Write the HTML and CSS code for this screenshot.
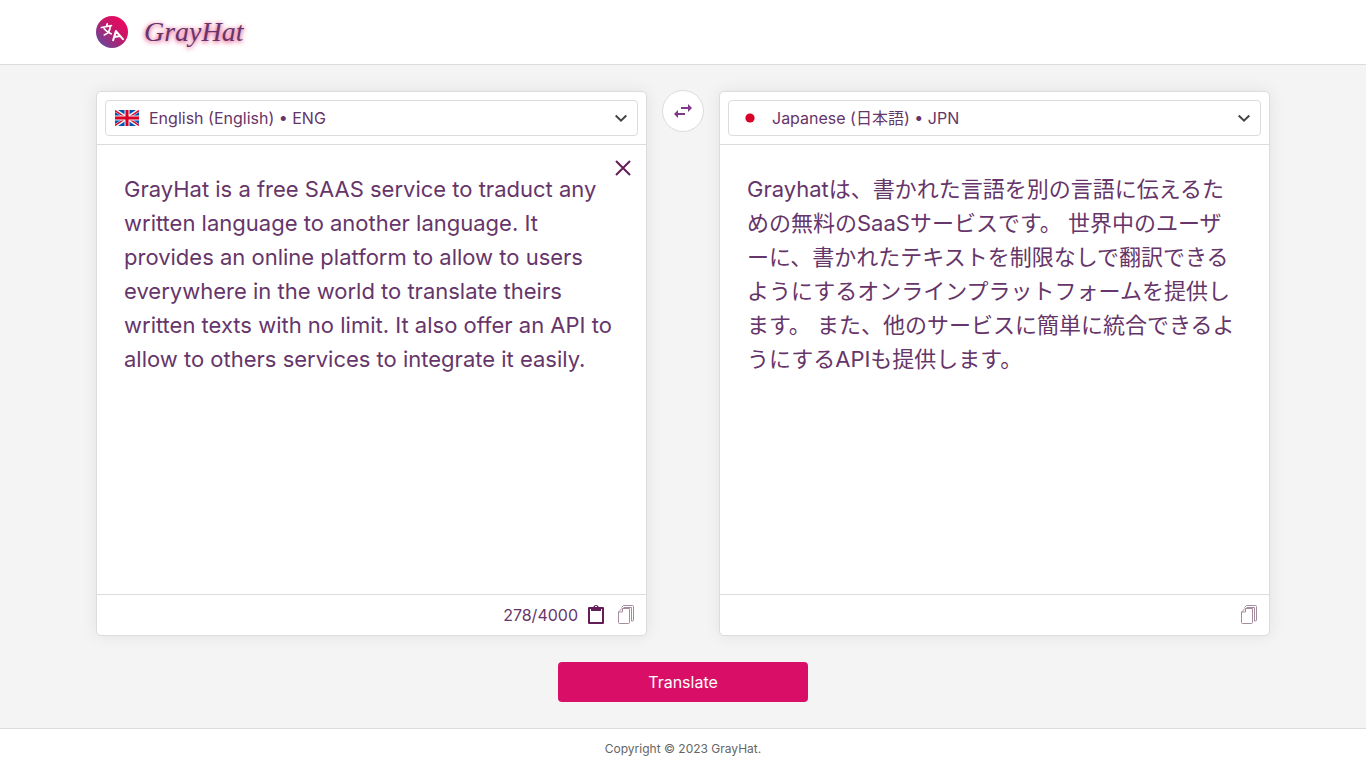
FILE: index.html
```
<!DOCTYPE html>
<html lang="en">
<head>
  <meta charset="utf-8">
  <meta name="viewport" content="width=device-width, initial-scale=1">
  <title>GrayHat</title>
  <link rel="stylesheet" href="styles.css">
</head>
<body>
  <header class="header">
    <a class="brand" href="#">
      <svg class="brand-logo" viewBox="0 0 34 34" aria-hidden="true">
        <defs>
          <linearGradient id="brand-fill" x1="0.85" y1="0.15" x2="0.15" y2="0.9">
            <stop offset="0" stop-color="#ea0960"/>
            <stop offset="0.4" stop-color="#c51768"/>
            <stop offset="1" stop-color="#6b4699"/>
          </linearGradient>
        </defs>
        <circle cx="17" cy="17" r="17" fill="url(#brand-fill)"/>
        <g fill="none" stroke="#fff" stroke-width="1.8" stroke-linecap="round" stroke-linejoin="round">
          <path d="M5.800 12.200 16.400 10.200M12 8.300l-1 3M15.200 10.700c-.3 4.500-2.200 7.800-6.400 9.400M8.700 13.500c2 2.600 4.500 4.400 7.500 5.400"/>
          <path stroke-width="2.200" d="M18.200 25.700 21.200 16 28.600 24.600M19.500 22.300l6.400-1"/>
        </g>
      </svg>
      <span class="brand-name">GrayHat</span>
    </a>
  </header>

  <main class="main">
    <form class="translator">
      <section class="panel">
        <div class="panel-head">
          <div class="picker">
            <svg class="flag" viewBox="0 0 24 16" aria-hidden="true">
              <path fill="#0052b4" d="M0 0h24v16H0z"/>
              <path stroke="#f0f0f0" stroke-width="3.400" d="M0 0l24 16M24 0 0 16"/>
              <path stroke="#d80027" stroke-width="1.300" d="M0 .6l11.500 7.700M24 15.400 12.500 7.700M24 .6 12.500 8.300M0 15.400l11.500-7.700"/>
              <path stroke="#f0f0f0" stroke-width="5" d="M12 0v16M0 8h24"/>
              <path stroke="#d80027" stroke-width="3" d="M12 0v16M0 8h24"/>
            </svg>
            <select class="picker-select" aria-label="Source language">
              <option>English (English) • ENG</option>
              <option>Japanese (日本語) • JPN</option>
            </select>
            <svg class="chevron" viewBox="0 0 14 14" aria-hidden="true"><path d="M1.700 4.500 7 9.600l5.300-5.100"/></svg>
          </div>
        </div>
        <div class="panel-body">
          <textarea class="text" aria-label="Text to translate" spellcheck="false">GrayHat is a free SAAS service to traduct any written language to another language. It provides an online platform to allow to users everywhere in the world to translate theirs written texts with no limit. It also offer an API to allow to others services to integrate it easily.</textarea>
          <button class="icon-button clear" type="button" aria-label="Clear text">
            <svg class="icon-clear" viewBox="0 0 16 16" aria-hidden="true"><path d="M1 1l14 14M15 1 1 15"/></svg>
          </button>
        </div>
        <div class="panel-foot">
          <span class="counter">278/4000</span>
          <button class="icon-button" type="button" aria-label="Paste">
            <svg class="icon-paste" viewBox="0 0 20 20" aria-hidden="true">
              <path fill="none" stroke="#641d56" stroke-width="2" stroke-linejoin="round" d="M3 3h14v15H3z"/>
              <path fill="#641d56" fill-rule="evenodd" d="M5 2h2.300a2.800 2.800 0 0 1 5.400 0H15v4H5zM10 .8a1 1 0 1 0 0 2 1 1 0 0 0 0-2z"/>
            </svg>
          </button>
          <button class="icon-button" type="button" aria-label="Copy source text">
            <svg class="icon-copy" viewBox="0 0 20 20" aria-hidden="true">
              <path d="M6 3.500h7.500v14a1 1 0 0 1-1 1h-9a1 1 0 0 1-1-1V7zM6.500 3.500v3.500h-4"/>
              <path d="M5.500 2.500 7.500.5h9a1 1 0 0 1 1 1v13.500a1 1 0 0 1-1 1h-1M7.500 2.500h8V16"/>
            </svg>
          </button>
        </div>
      </section>

      <button class="swap" type="button" aria-label="Swap languages">
        <svg class="icon-swap" viewBox="0 0 18 14" aria-hidden="true"><path d="M14 0 18 4l-4 4V5H7V3h7zM4 6 0 10l4 4v-3h7V9H4z"/></svg>
      </button>

      <section class="panel">
        <div class="panel-head">
          <div class="picker">
            <svg class="flag" viewBox="0 0 24 16" aria-hidden="true">
              <path fill="#fff" d="M0 0h24v16H0z"/>
              <circle cx="12" cy="8" r="4.600" fill="#d80027"/>
            </svg>
            <select class="picker-select" aria-label="Target language">
              <option>Japanese (日本語) • JPN</option>
              <option>English (English) • ENG</option>
            </select>
            <svg class="chevron" viewBox="0 0 14 14" aria-hidden="true"><path d="M1.700 4.500 7 9.600l5.300-5.100"/></svg>
          </div>
        </div>
        <div class="panel-body">
          <textarea class="text" lang="ja" aria-label="Translation" spellcheck="false" readonly>Grayhatは、書かれた言語を別の言語に伝えるための無料のSaaSサービスです。 世界中のユーザーに、書かれたテキストを制限なしで翻訳できるようにするオンラインプラットフォームを提供します。 また、他のサービスに簡単に統合できるようにするAPIも提供します。</textarea>
        </div>
        <div class="panel-foot">
          <button class="icon-button" type="button" aria-label="Copy translation">
            <svg class="icon-copy" viewBox="0 0 20 20" aria-hidden="true">
              <path d="M6 3.500h7.500v14a1 1 0 0 1-1 1h-9a1 1 0 0 1-1-1V7zM6.500 3.500v3.500h-4"/>
              <path d="M5.500 2.500 7.500.5h9a1 1 0 0 1 1 1v13.500a1 1 0 0 1-1 1h-1M7.500 2.500h8V16"/>
            </svg>
          </button>
        </div>
      </section>

      <button class="translate" type="submit">Translate</button>
    </form>
  </main>

  <footer class="footer">Copyright © 2023 GrayHat.</footer>
</body>
</html>
```
FILE: styles.css
```
* {
  box-sizing: border-box;
}

body {
  margin: 0;
  min-height: 100vh;
  display: flex;
  flex-direction: column;
  background: #f4f4f4;
  color: #663569;
  font-family: Inter, "Noto Sans CJK JP", sans-serif;
  font-size: 16px;
}

button,
select,
textarea {
  font: inherit;
  color: inherit;
  margin: 0;
}

button {
  cursor: pointer;
}

.header {
  display: flex;
  padding: 0 96px;
  background: #fff;
  border-bottom: 1px solid #dcdcdc;
}

.brand {
  display: flex;
  align-items: center;
  gap: 16px;
  height: 64px;
  color: #663569;
  text-decoration: none;
}

.brand-logo {
  width: 32px;
  height: 32px;
}

.brand-name {
  font-family: "Liberation Serif", serif;
  font-size: 28px;
  font-style: italic;
  line-height: 32px;
  text-shadow: 0 1px 5px #e0145f;
}

.main {
  flex: 1;
  display: flex;
  padding: 26px 96px;
}

.translator {
  flex: 1;
  display: grid;
  grid-template-columns: 1fr 42px 1fr;
  grid-template-rows: 1fr auto;
  gap: 26px 15px;
}

.panel {
  display: flex;
  flex-direction: column;
  min-width: 0;
  background: #fff;
  border: 1px solid #dcdcdc;
  border-radius: 5px;
  box-shadow: 0 0 16px rgba(0, 0, 0, 0.08);
}

.panel-head {
  padding: 8px;
  border-bottom: 1px solid #dcdcdc;
}

.picker {
  display: grid;
  grid-template-columns: 44px 1fr 34px;
  align-items: center;
  height: 36px;
}

.flag {
  grid-area: 1 / 1;
  z-index: 1;
  width: 24px;
  height: 16px;
  margin-left: 10px;
  pointer-events: none;
}

.picker-select {
  grid-area: 1 / 1 / 2 / 4;
  width: 100%;
  height: 36px;
  padding: 0 34px 0 43px;
  appearance: none;
  background: #fff;
  border: 1px solid #dcdcdc;
  border-radius: 4px;
}

.chevron {
  grid-area: 1 / 3;
  z-index: 1;
  width: 14px;
  height: 14px;
  margin-left: 10px;
  fill: none;
  stroke: #444;
  stroke-width: 2;
  pointer-events: none;
}

.panel-body {
  position: relative;
  flex: 1;
  display: flex;
}

.text {
  flex: 1;
  min-width: 0;
  padding: 27px;
  border: 0;
  border-radius: 0;
  outline: 0;
  resize: none;
  background: transparent;
  font-size: 22px;
  line-height: 34px;
  line-break: loose;
}

.icon-button {
  display: flex;
  padding: 0;
  border: 0;
  background: none;
}

.clear {
  position: absolute;
  top: 15px;
  right: 15px;
}

.icon-clear {
  width: 16px;
  height: 16px;
  fill: none;
  stroke: #641d56;
  stroke-width: 2;
}

.panel-foot {
  display: flex;
  align-items: center;
  justify-content: flex-end;
  gap: 10px;
  height: 41px;
  padding: 0 10px;
  border-top: 1px solid #dcdcdc;
}

.counter {
  margin-right: -2px;
}

.icon-paste,
.icon-copy {
  width: 20px;
  height: 20px;
}

.icon-copy {
  fill: none;
  stroke: #a48d9f;
  stroke-width: 1;
}

.swap {
  display: flex;
  align-items: center;
  justify-content: center;
  width: 42px;
  height: 42px;
  margin-top: -1px;
  padding: 0;
  border: 1px solid #dcdcdc;
  border-radius: 50%;
  background: #fff;
}

.icon-swap {
  width: 18px;
  height: 14px;
  fill: #80388a;
}

.translate {
  grid-column: 1 / -1;
  justify-self: center;
  width: 250px;
  height: 40px;
  border: 0;
  border-radius: 4px;
  background: #d90f67;
  color: #fff;
}

.footer {
  padding: 10px 96px;
  background: #fff;
  border-top: 1px solid #dcdcdc;
  color: #666;
  font-size: 12px;
  line-height: 19px;
  text-align: center;
}
```
